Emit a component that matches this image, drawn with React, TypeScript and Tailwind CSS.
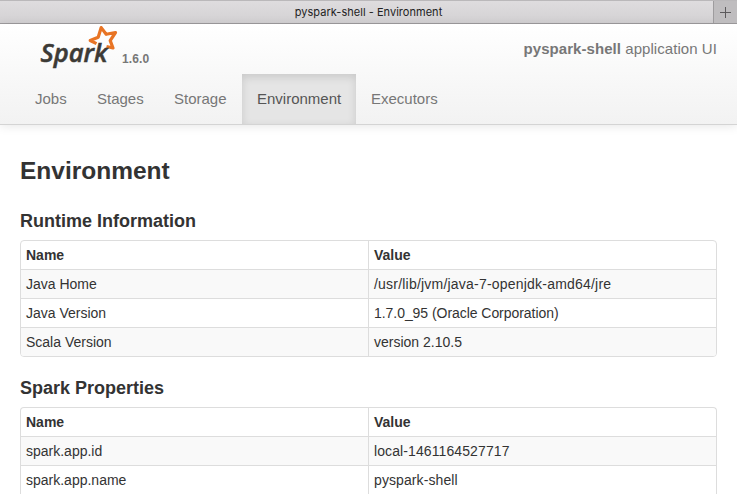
import React from "react";

const tabs = [
  { label: "Jobs", width: "w-[62px]" },
  { label: "Stages", width: "w-[77px]" },
  { label: "Storage", width: "w-[83px]" },
  { label: "Environment", width: "w-[114px]", active: true },
  { label: "Executors", width: "w-[98px]" },
];

type Row = { name: string; value: string; spacing?: string };

const runtime: Row[] = [
  { name: "Java Home", value: "/usr/lib/jvm/java-7-openjdk-amd64/jre", spacing: "tracking-[0.21px]" },
  { name: "Java Version", value: "1.7.0_95 (Oracle Corporation)", spacing: "tracking-[-0.05px]" },
  { name: "Scala Version", value: "version 2.10.5" },
];

const properties: Row[] = [
  { name: "spark.app.id", value: "local-1461164527717", spacing: "tracking-[0.1px]" },
  { name: "spark.app.name", value: "pyspark-shell", spacing: "tracking-[0.1px]" },
];

function SparkLogo() {
  return (
    <svg width="80" height="44" viewBox="39 25 80 44" className="block" aria-label="Spark">
      <path
        d="M96.5 43.6 L90.2 40.5 L98.2 37.2 L101.2 27.6 L106.2 34.3 L115.5 32.5 L110.2 40.6 L113 48 L106.5 46.5"
        fill="none"
        stroke="#e87424"
        strokeWidth="3.2"
        strokeLinejoin="round"
      />
      <text
        transform="translate(40.5 61.5)"
        fontFamily="Open Sans, Noto Sans, sans-serif"
        fontSize="25"
        fontWeight="600"
        fontStyle="italic"
        fill="#3c3a36"
        stroke="#3c3a36"
        strokeWidth="0.5"
        textLength="67"
        lengthAdjust="spacingAndGlyphs"
      >
        Spark
      </text>
    </svg>
  );
}

function InfoTable({ rows, open = false }: { rows: Row[]; open?: boolean }) {
  return (
    <div
      className={
        "overflow-hidden border border-[#dddddd] text-sm leading-5 " +
        (open ? "rounded-t border-b-0" : "rounded")
      }
    >
      <div className="grid h-7 grid-cols-[347px_1fr] font-bold">
        <div className="px-[5px] py-1">Name</div>
        <div className="border-l border-[#dddddd] px-[5px] py-1">Value</div>
      </div>
      {rows.map((row) => (
        <div
          key={row.name}
          className="grid h-[29px] grid-cols-[347px_1fr] border-t border-[#dddddd] odd:bg-white even:bg-[#f9f9f9]"
        >
          <div className="px-[5px] py-1">{row.name}</div>
          <div className={"border-l border-[#dddddd] px-[5px] py-1 " + (row.spacing ?? "")}>{row.value}</div>
        </div>
      ))}
    </div>
  );
}

export default function App() {
  return (
    <div className="h-[494px] w-[737px] overflow-hidden bg-white font-['Liberation_Sans',Arial,sans-serif] text-[#333333]">
      <div className="flex h-6 border-t border-b border-t-[#bab8ba] border-b-[#9e9c9e] bg-linear-to-b from-[#dedcde] to-[#d3d1d3]">
        <div className="flex-1 pl-6 text-center font-[Inter,sans-serif] text-[11px] leading-[23px] tracking-[0.03px] text-[#222222]">
          pyspark-shell - Environment
        </div>
        <div className="flex w-6 items-center justify-center border-l border-[#9e9c9e] bg-[#bfbdbf]">
          <svg width="11" height="11" viewBox="0 0 11 11" stroke="#5c5a5c">
            <path d="M5.5 0v11M0 5.5h11" />
          </svg>
        </div>
      </div>
      <header className="h-[101px] border-b border-[#d4d4d4] bg-linear-to-b from-white to-[#f2f2f2] text-[15px] text-[#777777] shadow-[0_1px_10px_rgba(0,0,0,0.1)]">
        <div className="flex h-[50px] justify-between pr-5 pl-[39px]">
          <div className="flex pt-px">
            <SparkLogo />
            <span className="pt-[24px] pl-[3px] text-xs leading-5 font-bold tracking-[0.1px]">1.6.0</span>
          </div>
          <div className="pt-[15px] leading-5 tracking-[0.06px]">
            <strong>pyspark-shell</strong> application UI
          </div>
        </div>
        <nav className="flex h-[50px] pl-5">
          {tabs.map((tab) => (
            <a
              key={tab.label}
              className={
                "px-[15px] py-[15px] leading-5 whitespace-nowrap " +
                tab.width +
                (tab.active
                  ? " bg-[#e5e5e5] text-[#555555] shadow-[inset_0_3px_8px_rgba(0,0,0,0.125)]"
                  : "")
              }
            >
              {tab.label}
            </a>
          ))}
        </nav>
      </header>
      <main className="px-5 pt-[25px]">
        <h1 className="h-10 pt-px text-[24.5px] leading-10 font-bold">Environment</h1>
        <h2 className="mt-[10px] h-10 pt-px text-lg leading-10 font-bold">Runtime Information</h2>
        <InfoTable rows={runtime} />
        <h2 className="mt-[10px] h-10 pt-px text-lg leading-10 font-bold">Spark Properties</h2>
        <InfoTable rows={properties} open />
      </main>
    </div>
  );
}
